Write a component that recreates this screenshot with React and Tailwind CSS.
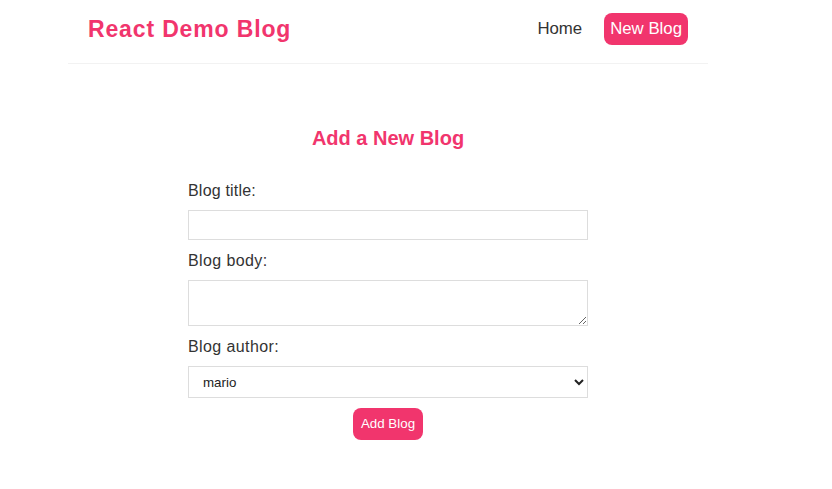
export default function App() {
  const font = { fontFamily: '"Liberation Sans", Arial, sans-serif' };
  return (
    <div className="w-[776px] bg-white text-[#333] font-['Liberation_Sans',Arial,sans-serif]">
      <nav className="mx-auto flex h-[64px] w-[640px] items-start border-b border-[#f2f2f2] px-5 pt-[13px]">
        <h1 className="flex h-[32px] items-center text-[23px] font-bold tracking-[0.85px] text-[#f1356d]">React Demo Blog</h1>
        <div className="ml-auto flex items-center">
          <a href="#" className="ml-4 flex h-[32px] items-center px-1.5 text-[16.8px] text-[#333]">Home</a>
          <a href="#" className="ml-4 flex h-[32px] items-center rounded-lg bg-[#f1356d] px-1.5 text-[16.8px] text-white">New Blog</a>
        </div>
      </nav>
      <div className="mx-auto mt-[62px] w-[400px] pb-[49px] text-center">
        <h2 className="h-[24px] text-[20px] font-bold leading-[24px] text-[#f1356d]">Add a New Blog</h2>
        <form className="mt-[31px] flex flex-col">
          <label className="block h-[20px] text-left text-[16px] leading-[20px] tracking-[0.2px]">Blog title:</label>
          <input type="text" className="mt-[9px] block h-[30px] w-full border border-[#ddd] px-2.5 text-[13.33px] outline-none" />
          <label className="mt-[11px] block h-[20px] text-left text-[16px] leading-[20px] tracking-[0.4px]">Blog body:</label>
          <textarea className="mt-[9px] block h-[46px] w-full border border-[#ddd] px-2.5 py-1.5 text-[13.33px] outline-none"></textarea>
          <label className="mt-[11px] block h-[20px] text-left text-[16px] leading-[20px] tracking-[0.4px]">Blog author:</label>
          <select className="mt-[9px] block h-[32px] w-full border border-[#ddd] bg-white px-2.5 text-[13.33px] text-[#222] outline-none" defaultValue="mario">
            <option value="mario">mario</option>
            <option value="yoshi">yoshi</option>
          </select>
          <div className="mt-[10px] flex justify-center">
            <button type="button" className="h-[32px] rounded-lg bg-[#f1356d] px-2 text-[13.33px] text-white" style={font}>Add Blog</button>
          </div>
        </form>
      </div>
    </div>
  );
}
